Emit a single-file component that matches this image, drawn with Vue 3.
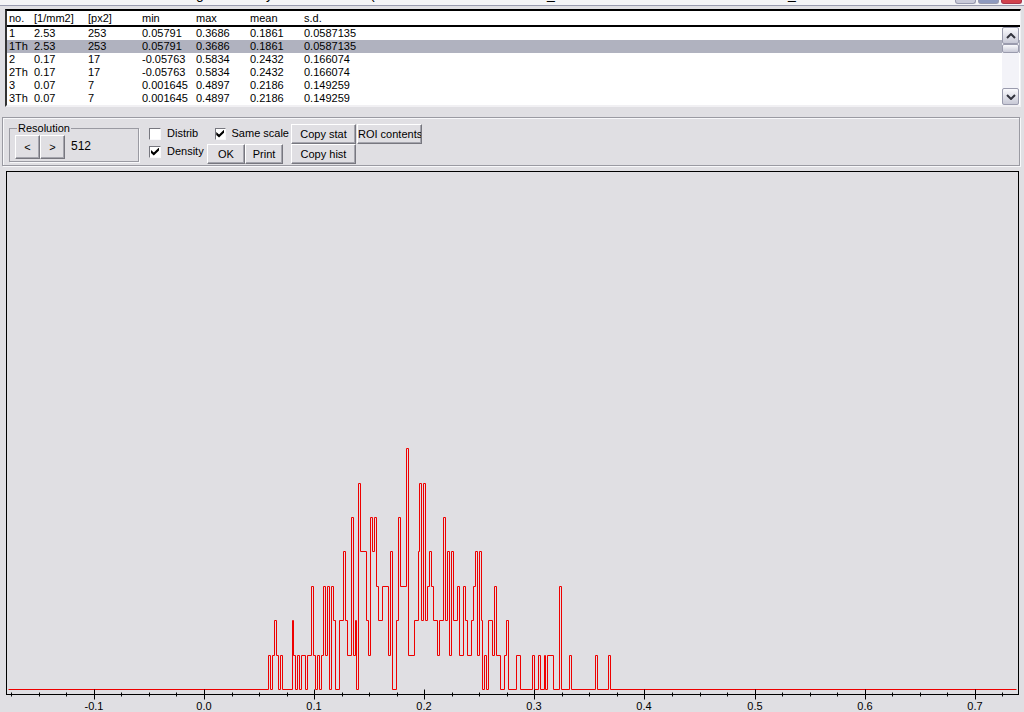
<script setup>
import { ref } from 'vue'

const columns = ['no.', '[1/mm2]', '[px2]', 'min', 'max', 'mean', 's.d.']
const rows = [
  ['1', '2.53', '253', '0.05791', '0.3686', '0.1861', '0.0587135'],
  ['1Th', '2.53', '253', '0.05791', '0.3686', '0.1861', '0.0587135'],
  ['2', '0.17', '17', '-0.05763', '0.5834', '0.2432', '0.166074'],
  ['2Th', '0.17', '17', '-0.05763', '0.5834', '0.2432', '0.166074'],
  ['3', '0.07', '7', '0.001645', '0.4897', '0.2186', '0.149259'],
  ['3Th', '0.07', '7', '0.001645', '0.4897', '0.2186', '0.149259'],
]
const selected = ref(1)
const distrib = ref(false)
const density = ref(true)
const sameScale = ref(true)
const resolution = ref(512)

// Vertical position of each count level, then [x, count] steps of the histogram
const levels = [519, 485, 450, 416, 381, 347, 313, 278]
const steps = [
  [268, 1], [270, 0], [272, 1], [274, 2], [276, 1], [278, 0], [280, 1], [282, 0],
  [292, 2], [293, 1], [295, 0], [297, 1], [299, 0], [301, 1], [305, 0], [307, 1],
  [311, 3], [313, 1], [315, 0], [317, 1], [319, 0], [321, 1], [323, 3], [325, 1],
  [327, 3], [329, 0], [331, 3], [333, 2], [335, 0], [339, 2], [343, 4], [345, 2],
  [347, 1], [351, 5], [353, 1], [355, 2], [356, 0], [358, 6], [360, 4], [366, 2],
  [368, 1], [370, 5], [372, 4], [374, 5], [376, 3], [378, 2], [382, 3], [388, 1],
  [390, 4], [392, 0], [396, 2], [398, 5], [400, 3], [406, 7], [408, 1], [414, 2],
  [418, 4], [419, 6], [421, 2], [423, 6], [425, 2], [427, 3], [429, 4], [431, 3],
  [433, 2], [437, 1], [439, 2], [443, 5], [445, 2], [447, 4], [449, 1], [451, 4],
  [453, 2], [457, 3], [459, 1], [463, 3], [465, 2], [467, 1], [471, 2], [473, 3],
  [475, 4], [477, 1], [479, 4], [481, 2], [482, 0], [484, 1], [486, 0], [488, 2],
  [492, 1], [494, 3], [496, 1], [500, 0], [504, 1], [506, 2], [508, 0], [516, 1],
  [520, 0], [532, 1], [534, 0], [538, 1], [540, 0], [544, 1], [545, 0], [547, 1],
  [553, 0], [559, 3], [561, 0], [569, 1], [571, 0], [595, 1], [597, 0], [608, 1],
  [610, 0],
]
const histogram = `M8 ${levels[0]}` + steps.map(([x, n]) => `H${x}V${levels[n]}`).join('') + 'H1016'

const ticks = []
for (let i = -7; i <= 29; i++) {
  const x = Math.round(204 + i * 27.53)
  if (x > 8 && x < 1010) ticks.push({ x, major: i % 4 === 0, label: (i / 40).toFixed(1) })
}
const tickPath = ticks.map(t => (t.major ? `M${t.x} 519V529` : `M${t.x} 522V526`)).join('')
const labels = ticks.filter(t => t.major)
</script>

<template>
  <div class="window">
    <header class="titlebar">
      <span class="cut c1">g</span>
      <span class="cut c2">y</span>
      <span class="cut c3">(</span>
      <span class="cut c4">_</span>
      <span class="cut c5">_</span>
      <div class="caption">
        <button class="cap min" aria-label="Minimize"></button>
        <button class="cap max" aria-label="Maximize"></button>
        <button class="cap close" aria-label="Close"></button>
      </div>
    </header>

    <section class="list">
      <table>
        <thead>
          <tr><th v-for="c in columns" :key="c">{{ c }}</th><th></th></tr>
        </thead>
        <tbody>
          <tr v-for="(r, i) in rows" :key="i" :class="{ selected: i === selected }" @click="selected = i">
            <td v-for="(v, j) in r" :key="j">{{ v }}</td><td></td>
          </tr>
        </tbody>
      </table>
      <div class="scrollbar">
        <button aria-label="Scroll up">
          <svg width="10" height="6" viewBox="0 0 10 6"><path d="M1 5L5 1L9 5" /></svg>
        </button>
        <div class="thumb"></div>
        <button class="down" aria-label="Scroll down">
          <svg width="10" height="6" viewBox="0 0 10 6"><path d="M1 1L5 5L9 1" /></svg>
        </button>
      </div>
    </section>

    <section class="toolbar">
      <fieldset>
        <legend>Resolution</legend>
        <button class="btn step" @click="resolution /= 2">&lt;</button>
        <button class="btn step" @click="resolution *= 2">&gt;</button>
        <output>{{ resolution }}</output>
      </fieldset>
      <div class="group checks">
        <label><input v-model="distrib" type="checkbox" />Distrib</label>
        <label><input v-model="density" type="checkbox" />Density</label>
      </div>
      <div class="group middle">
        <label><input v-model="sameScale" type="checkbox" />Same scale</label>
        <div class="pair">
          <button class="btn">OK</button>
          <button class="btn">Print</button>
        </div>
      </div>
      <div class="group copy">
        <button class="btn">Copy stat</button>
        <button class="btn">Copy hist</button>
      </div>
      <button class="btn roi">ROI contents</button>
    </section>

    <svg class="chart" viewBox="0 0 1024 542" role="img" aria-label="Histogram">
      <g transform="translate(0.5 0.5)">
        <rect x="6" y="1" width="1012" height="523" class="axis" />
        <path :d="histogram" class="hist" />
        <path :d="tickPath" class="axis" />
      </g>
      <text v-for="t in labels" :key="t.x" :x="t.x" y="540">{{ t.label }}</text>
    </svg>
  </div>
</template>

<style>
body {
  margin: 0;
  background: #e0dfe3;
  overflow: hidden;
}
</style>

<style scoped>
.window {
  background: #e0dfe3;
  color: #000;
  font: 11px/13px "Liberation Sans", Arial, sans-serif;
}
button, input {
  font: inherit;
  color: inherit;
  margin: 0;
  padding: 0;
  box-sizing: border-box;
}
.titlebar {
  position: relative;
  height: 5px;
  overflow: hidden;
  background: #f4f4f6;
  border-bottom: 1px solid #9a9cb0;
}
.cut {
  position: absolute;
  top: -13px;
  font-size: 14px;
  line-height: 15px;
}
.c1 { left: 196px; }
.c2 { left: 266px; }
.c3 { left: 370px; }
.c4 { left: 547px; }
.c5 { left: 788px; }
.caption {
  display: flex;
  justify-content: flex-end;
  gap: 2px;
  padding-right: 2px;
}
.cap {
  width: 21px;
  height: 4px;
  border: 1px solid #9799ae;
  border-top: 0;
  border-radius: 0 0 3px 3px;
  background: #c9cad9;
}
.max { background: #8e9abf; }
.close { background: #d1424c; border-color: #a8344a; }
.list {
  position: relative;
  margin: 3px 3px 0 5px;
  background: #fff;
  border: 2px solid #000;
  border-width: 2px 1px 2px 2px;
  border-color: #000 #f1f0f3 #f1f0f3 #333;
}
table {
  width: 100%;
  table-layout: fixed;
  border-collapse: collapse;
}
th, td {
  width: 54px;
  height: 13px;
  padding: 0;
  font-weight: normal;
  text-align: left;
  white-space: nowrap;
}
th:first-child, td:first-child {
  width: 25px;
  padding-left: 2px;
}
th:last-child, td:last-child { width: auto; }
th {
  height: 14px;
  border-bottom: 2px solid #000;
}
.selected { background: #b0b2bf; }
.scrollbar {
  position: absolute;
  top: 16px;
  right: 1px;
  bottom: 0;
  width: 17px;
  display: flex;
  flex-direction: column;
  background: #f3f3f8;
}
.scrollbar button, .thumb {
  border: 1px solid #9a9bad;
  border-radius: 2px;
  background: linear-gradient(#fafafd, #c8c9d6);
}
.scrollbar button {
  height: 17px;
  display: grid;
  place-items: center;
}
.scrollbar path {
  fill: none;
  stroke: #32333d;
  stroke-width: 2;
}
.thumb { height: 7px; }
.down { margin-top: auto; }
.toolbar {
  display: flex;
  align-items: flex-start;
  height: 47px;
  margin: 10px 4px 0 2px;
  border: 1px solid #9a9aa2;
  box-shadow: inset 1px 1px #f8f8fa, 1px 1px #f8f8fa;
}
fieldset {
  display: flex;
  box-sizing: border-box;
  width: 130px;
  height: 40px;
  margin: 4px 0 0 6px;
  padding: 0 0 0 5px;
  border: 1px solid #9a9aa2;
  box-shadow: 1px 1px #f8f8fa;
  min-width: 0;
}
legend {
  margin-left: 2px;
  padding: 0 1px;
  background: #e0dfe3;
}
output { margin: 5px 0 0 6px; font-size: 12px; }
.btn {
  height: 20px;
  border: 1px solid;
  border-color: #fff #77777f #77777f #fff;
  box-shadow: inset -1px -1px #a5a5ad;
  background: #e0dfe3;
  white-space: nowrap;
  overflow: hidden;
}
.step {
  width: 25px;
  height: 24px;
}
.group {
  display: flex;
  flex-direction: column;
}
.checks {
  width: 58px;
  padding-top: 9px;
  margin-left: 10px;
  gap: 5px;
}
.middle {
  width: 82px;
  padding-top: 9px;
}
.middle label { padding-left: 8px; }
.pair {
  display: flex;
  margin-top: 4px;
}
.pair .btn { width: 38px; }
.copy { padding-top: 6px; margin-left: 2px; }
.copy .btn { width: 65px; }
.roi {
  width: 65px;
  margin: 6px 0 0 1px;
}
label {
  display: flex;
  align-items: center;
  gap: 6px;
  height: 13px;
  white-space: nowrap;
}
input {
  appearance: none;
  width: 12px;
  height: 12px;
  background: #fff;
  border: 1px solid;
  border-color: #77777f #f8f8fa #f8f8fa #77777f;
  display: grid;
  place-items: center;
}
input:checked::before {
  content: "";
  width: 8px;
  height: 8px;
  background: #000;
  clip-path: polygon(0 30%, 35% 62%, 100% 0, 100% 38%, 35% 100%, 0 68%);
}
.chart {
  display: block;
  width: 100%;
  margin-top: 4px;
}
.axis, .hist {
  fill: none;
  stroke: #000;
}
.hist { stroke: #ee0000; }
text { text-anchor: middle; }
</style>
